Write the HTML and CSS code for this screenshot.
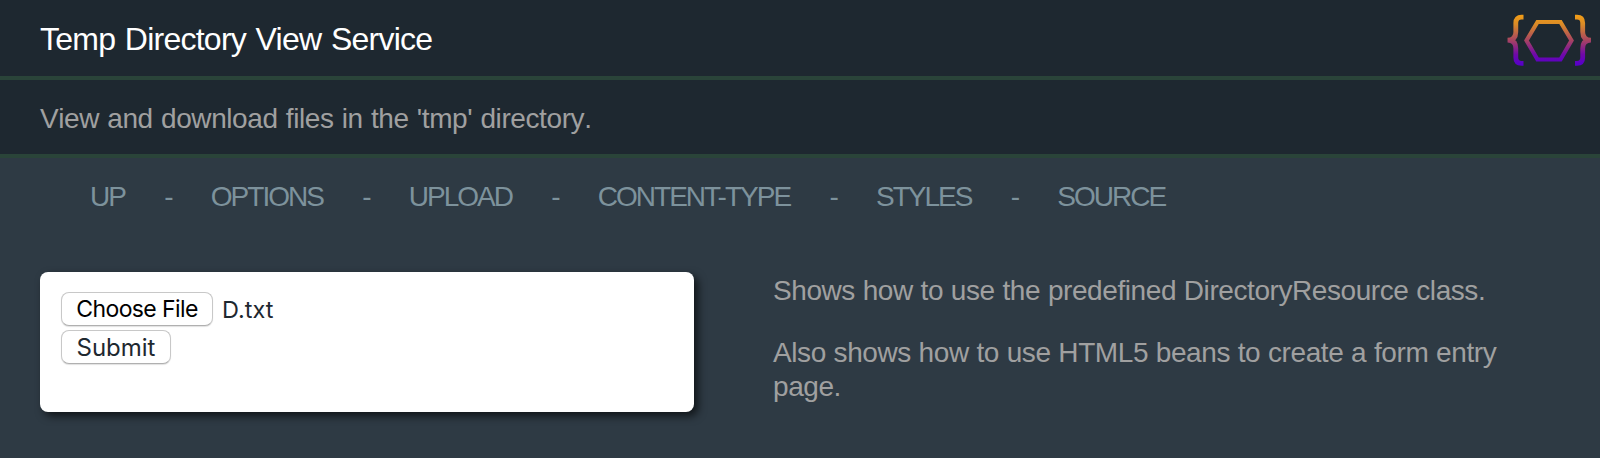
FILE: index.html
```html
<!DOCTYPE html>
<html lang="en">
<head>
<meta charset="utf-8">
<title>Temp Directory View Service</title>
<link rel="stylesheet" href="styles.css">
</head>
<body>
<header class="header">
  <h1 class="title">Temp Directory View Service</h1>
  <svg class="logo" width="84" height="52" viewBox="0 0 84 52" fill="none" stroke="url(#g)">
    <defs>
      <linearGradient id="g" gradientUnits="userSpaceOnUse" x1="0" y1="2" x2="0" y2="50">
        <stop offset="0" stop-color="#f09c18"/>
        <stop offset=".18" stop-color="#d98a28"/>
        <stop offset=".5" stop-color="#a84560"/>
        <stop offset=".8" stop-color="#7008a8"/>
        <stop offset="1" stop-color="#5800c8"/>
      </linearGradient>
    </defs>
    <path stroke-width="4.8" d="M16.5 3.2H14.5Q8.8 3.2 8.8 9V18Q8.8 26 .6 26.2Q8.8 26.400 8.800 34.500V43.500Q8.800 49.300 14.500 49.300H16.500"/>
    <path stroke-width="4.2" d="M30.500 8H53.500L64.500 26.500L53.500 45.500H30.500L19.500 26.500Z"/>
    <path stroke-width="4.8" d="M68 3.200H70Q75.700 3.200 75.700 9V18Q75.700 26 83.900 26.200Q75.700 26.400 75.700 34.500V43.500Q75.700 49.300 70 49.300H68"/>
  </svg>
</header>
<div class="subtitle">View and download files in the 'tmp' directory.</div>
<nav class="nav">
  <a>UP</a><span>-</span><a>OPTIONS</a><span>-</span><a>UPLOAD</a><span>-</span><a>CONTENT-TYPE</a><span>-</span><a>STYLES</a><span>-</span><a>SOURCE</a>
</nav>
<main class="main">
  <form class="card">
    <div class="row"><button type="button" class="btn choose">Choose File</button><span class="file">D.txt</span></div>
    <div class="row"><button type="button" class="btn submit">Submit</button></div>
  </form>
  <aside class="aside">
    <p>Shows how to use the predefined DirectoryResource class.</p>
    <p>Also shows how to use HTML5 beans to create a form entry<br>page.</p>
  </aside>
</main>
</body>
</html>
```
FILE: styles.css
```css
* { box-sizing: border-box; }
body {
  margin: 0;
  height: 458px;
  overflow: hidden;
  background: #2e3a44;
  color: #a0a0a0;
  font: 28px/34px "Liberation Sans", Arial, sans-serif;
}
.header {
  display: flex;
  justify-content: space-between;
  height: 80px;
  padding: 14px 9px 0 40px;
  background: #1e2830;
  border-bottom: 4px solid #2a4439;
}
.title {
  margin: 6px 0 0;
  font-size: 32px;
  font-weight: 400;
  line-height: 38px;
  letter-spacing: -.75px;
  word-spacing: 1.4px;
  color: #fff;
}
.subtitle {
  height: 78px;
  padding: 22px 40px 0;
  background: #1e2830;
  border-bottom: 4px solid #2a4439;
  letter-spacing: -.4px;
  word-spacing: .8px;
  font-kerning: none;
}
.nav {
  display: flex;
  gap: 39.3px;
  height: 114px;
  padding: 22px 0 0 90px;
  color: #7d929c;
  letter-spacing: -2px;
}
.main { display: flex; gap: 79px; padding-left: 40px; }
.card {
  width: 654px;
  height: 140px;
  padding: 20px 21px;
  background: #fff;
  border-radius: 8px;
  box-shadow: 4px 4px 8px rgba(0, 0, 0, .65);
}
.row { display: flex; height: 38px; }
.btn {
  height: 34px;
  padding: 1px 0 0;
  border: 1px solid #c8c8c8;
  border-bottom-color: #b0b0b0;
  border-radius: 8px;
  background: #fff;
  box-shadow: 0 1px 1px rgba(0, 0, 0, .12);
  font: 24px/31px Inter, sans-serif;
  color: #000;
}
.choose { width: 152px; font-size: 23px; letter-spacing: -.6px; }
.submit { width: 110px; color: #1e2830; }
.file { margin-left: 9px; font: 23.5px/36px Inter, sans-serif; color: #1e2830; }
.aside {
  padding-top: 2px;
  letter-spacing: -.42px;
  word-spacing: .4px;
  white-space: nowrap;
  font-kerning: none;
}
.aside p { margin: 0 0 28px; }
```
